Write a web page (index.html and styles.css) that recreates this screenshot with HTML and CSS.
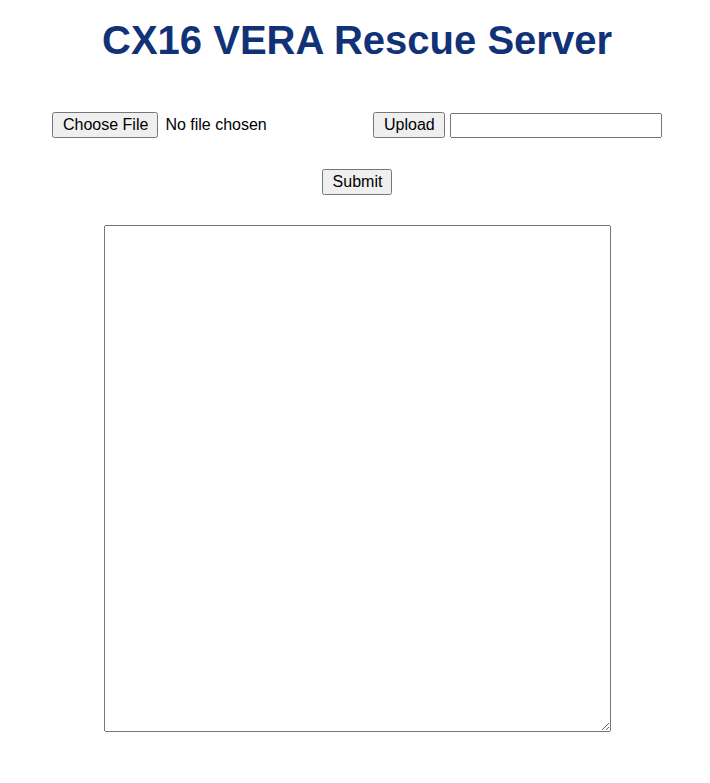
FILE: index.html
```html
<!DOCTYPE html>
<html>
<head>
<meta charset="utf-8">
<link rel="stylesheet" href="styles.css">
</head>
<body>
<h1 class="title">CX16 VERA Rescue Server</h1>
<form class="form">
  <div class="upload-row">
    <input type="file" class="file-input">
    <button type="button" class="btn">Upload</button>
    <input type="text" class="text-input">
  </div>
  <div class="submit-row">
    <button type="button" class="btn">Submit</button>
  </div>
  <div class="log-row">
    <textarea class="log"></textarea>
  </div>
</form>
</body>
</html>
```
FILE: styles.css
```css
body {
  margin: 8px;
  font-family: "Liberation Sans", Arial, sans-serif;
  background: #fff;
}
.title {
  font-family: "Liberation Sans", Arial, sans-serif;
  font-size: 40px;
  font-weight: bold;
  color: #123278;
  text-align: center;
  margin: 10px 0 0;
  padding-left: 4px;
}
.form {
  display: flex;
  flex-direction: column;
  align-items: center;
  padding-left: 4px;
}
.upload-row {
  display: flex;
  align-items: center;
  margin-top: 49px;
  padding-left: 40px;
  align-self: flex-start;
}
.file-input {
  font-family: "Liberation Sans", Arial, sans-serif;
  font-size: 16px;
  width: 321px;
  margin: 0;
}
.file-input::file-selector-button {
  font-family: "Liberation Sans", Arial, sans-serif;
  font-size: 16px;
  padding: 2px 8px 2px 9px;
  margin-right: 7px;
}
.btn {
  font-family: "Liberation Sans", Arial, sans-serif;
  font-size: 16px;
  margin: 0;
  padding: 2px 8px 2px 9px;
}
.text-input {
  font-family: "Liberation Sans", Arial, sans-serif;
  font-size: 16px;
  width: 212px;
  height: 25px;
  box-sizing: border-box;
  margin: 0 0 0 5px;
}
.submit-row {
  margin-top: 31px;
}
.log-row {
  margin-top: 30px;
}
.log {
  width: 507px;
  height: 507px;
  box-sizing: border-box;
  margin: 0;
  display: block;
}
```
